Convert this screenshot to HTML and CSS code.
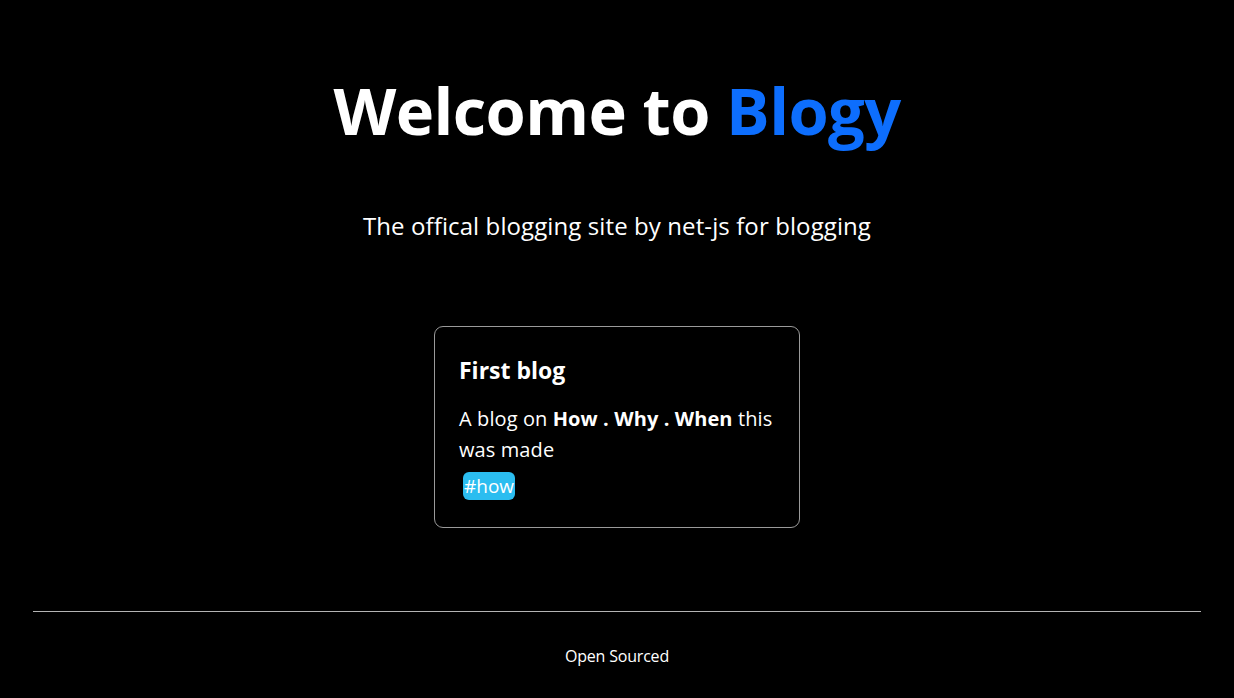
FILE: index.html
```html
<!DOCTYPE html>
<html lang="en">
<head>
<meta charset="utf-8">
<title>Blogy</title>
<link rel="stylesheet" href="styles.css">
</head>
<body>
<header class="hero">
  <h1 class="title">Welcome to <span class="brand">Blogy</span></h1>
  <p class="subtitle">The offical blogging site by net-js for blogging</p>
</header>
<main class="posts">
  <article class="card">
    <h2 class="card-title">First blog</h2>
    <p class="card-text">A blog on <b>How . Why . When</b> this was made</p>
    <span class="tag">#how</span>
  </article>
</main>
<footer class="footer">
  <hr class="rule">
  <p class="footer-text">Open Sourced</p>
</footer>
</body>
</html>
```

FILE: styles.css
```css
html, body {
  margin: 0;
  padding: 0;
  background: #000;
  color: #fff;
  font-family: "Open Sans", "Noto Sans", sans-serif;
}
body {
  height: 698px;
  overflow: hidden;
}
.hero {
  display: flex;
  flex-direction: column;
  align-items: center;
  padding-top: 64px;
}
.title {
  margin: 0;
  font-size: 65px;
  font-weight: 700;
  line-height: 92px;
  letter-spacing: -0.6px;
}
.brand {
  color: #0d6efd;
}
.subtitle {
  margin: 54px 0 0;
  font-size: 24px;
  line-height: 32px;
  letter-spacing: 0.1px;
}
.posts {
  display: flex;
  justify-content: center;
  margin-top: 84px;
}
.card {
  width: 366px;
  height: 202px;
  box-sizing: border-box;
  border: 1px solid #9a9a9a;
  border-radius: 9px;
  padding: 28px 12px 0 24px;
}
.card-title {
  margin: 0;
  font-size: 23px;
  font-weight: 700;
  line-height: 30px;
}
.card-text {
  margin: 18px 0 0;
  font-size: 20px;
  line-height: 31px;
  letter-spacing: 0.1px;
}
.tag {
  display: inline-block;
  margin: 7px 0 0 4px;
  padding: 0 1px;
  background: #2bbdf0;
  border-radius: 6px;
  font-size: 19px;
  line-height: 28px;
}
.footer {
  margin-top: 83px;
  padding: 0 33px;
  text-align: center;
}
.rule {
  margin: 0;
  border: 0;
  border-top: 1px solid #b4b4b4;
}
.footer-text {
  margin: 32px 0 0;
  font-size: 16px;
  line-height: 24px;
  letter-spacing: -0.2px;
}
```
